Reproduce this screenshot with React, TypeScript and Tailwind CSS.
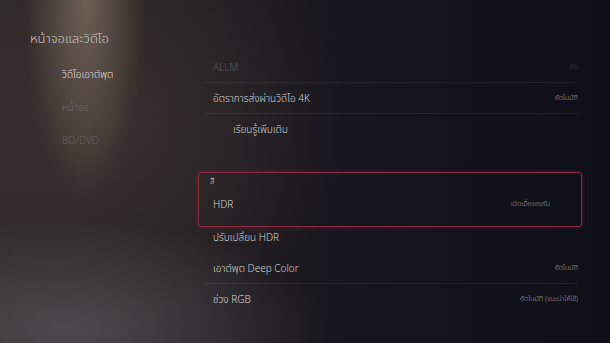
import React from 'react';

const font = { fontFamily: '"Noto Sans", "Noto Sans Thai", Tahoma, "DejaVu Sans", sans-serif' };

interface RowProps {
  label: string;
  value?: string;
  dim?: boolean;
  line?: boolean;
  indent?: boolean;
}

function Row({ label, value, dim, line, indent }: RowProps) {
  return (
    <div
      className={`ml-[7px] mr-[32px] h-[31px] flex items-center justify-between ${
        line ? 'border-b border-[#ffffff10]' : ''
      } ${indent ? 'pl-[28px]' : 'pl-[8px]'}`}
    >
      <span className={`text-[10px] ${dim ? 'text-[#5a5a64]' : 'text-[#d2d2d6]'}`}>{label}</span>
      {value && (
        <span className={`text-[7px] ${dim ? 'text-[#444550]' : 'text-[#9a9aa3]'}`}>{value}</span>
      )}
    </div>
  );
}

export default function App() {
  return (
    <div
      style={font}
      className="w-[610px] h-[343px] overflow-hidden flex font-light bg-[radial-gradient(ellipse_60px_200px_at_85px_0px,rgba(185,160,140,0.45),transparent),radial-gradient(ellipse_260px_110px_at_70px_330px,rgba(105,105,110,0.55),transparent),radial-gradient(ellipse_240px_220px_at_110px_120px,rgba(85,70,64,0.4),transparent),linear-gradient(to_right,#2c2726_0%,#231f20_28%,#17161e_55%,#0e0f18_100%)]"
    >
      {/* left navigation */}
      <div className="w-[198px] shrink-0 flex flex-col">
        <div className="pl-[30px] pt-[29px] h-[52px] text-[13px] text-[#cdc6c1]">หน้าจอและวิดีโอ</div>
        <div className="pl-[62px] pt-[6px] flex flex-col">
          <div className="h-[33px] flex items-center text-[10px] text-[#e0ddda]">วิดีโอเอาต์พุต</div>
          <div className="h-[33px] flex items-center text-[10px] text-[#6e6763]">หน้าจอ</div>
          <div className="h-[33px] flex items-center text-[10px] text-[#69635f]">BD/DVD</div>
        </div>
      </div>

      {/* settings list */}
      <div className="flex-1 flex flex-col pt-[52px]">
        <Row label="ALLM" value="ปิด" dim line />
        <Row label="อัตราการส่งผ่านวิดีโอ 4K" value="อัตโนมัติ" line />
        <Row label="เรียนรู้เพิ่มเติม" indent />

        <div className="mt-[27px] w-[384px] border border-[#8c2c42] rounded-[3px] shadow-[0_0_4px_rgba(160,40,70,0.45)] pb-[6px]">
          <div className="h-[16px] pl-[11px] flex items-center text-[8px] text-[#c8c8cc]">สี</div>
          <div className="ml-[6px] mr-[31px] h-[31px] pl-[8px] flex items-center justify-between">
            <span className="text-[10px] text-[#d2d2d6]">HDR</span>
            <span className="text-[7px] text-[#9a9aa3]">เปิดเมื่อรองรับ</span>
          </div>
        </div>

        <div className="ml-[7px] mr-[32px] h-[20px] pl-[8px] flex items-center">
          <span className="text-[10px] text-[#d2d2d6]">ปรับเปลี่ยน HDR</span>
        </div>
        <div className="mt-[6px]">
          <Row label="เอาต์พุต Deep Color" value="อัตโนมัติ" line />
        </div>
        <Row label="ช่วง RGB" value="อัตโนมัติ (แนะนำให้ใช้)" />
      </div>
    </div>
  );
}
